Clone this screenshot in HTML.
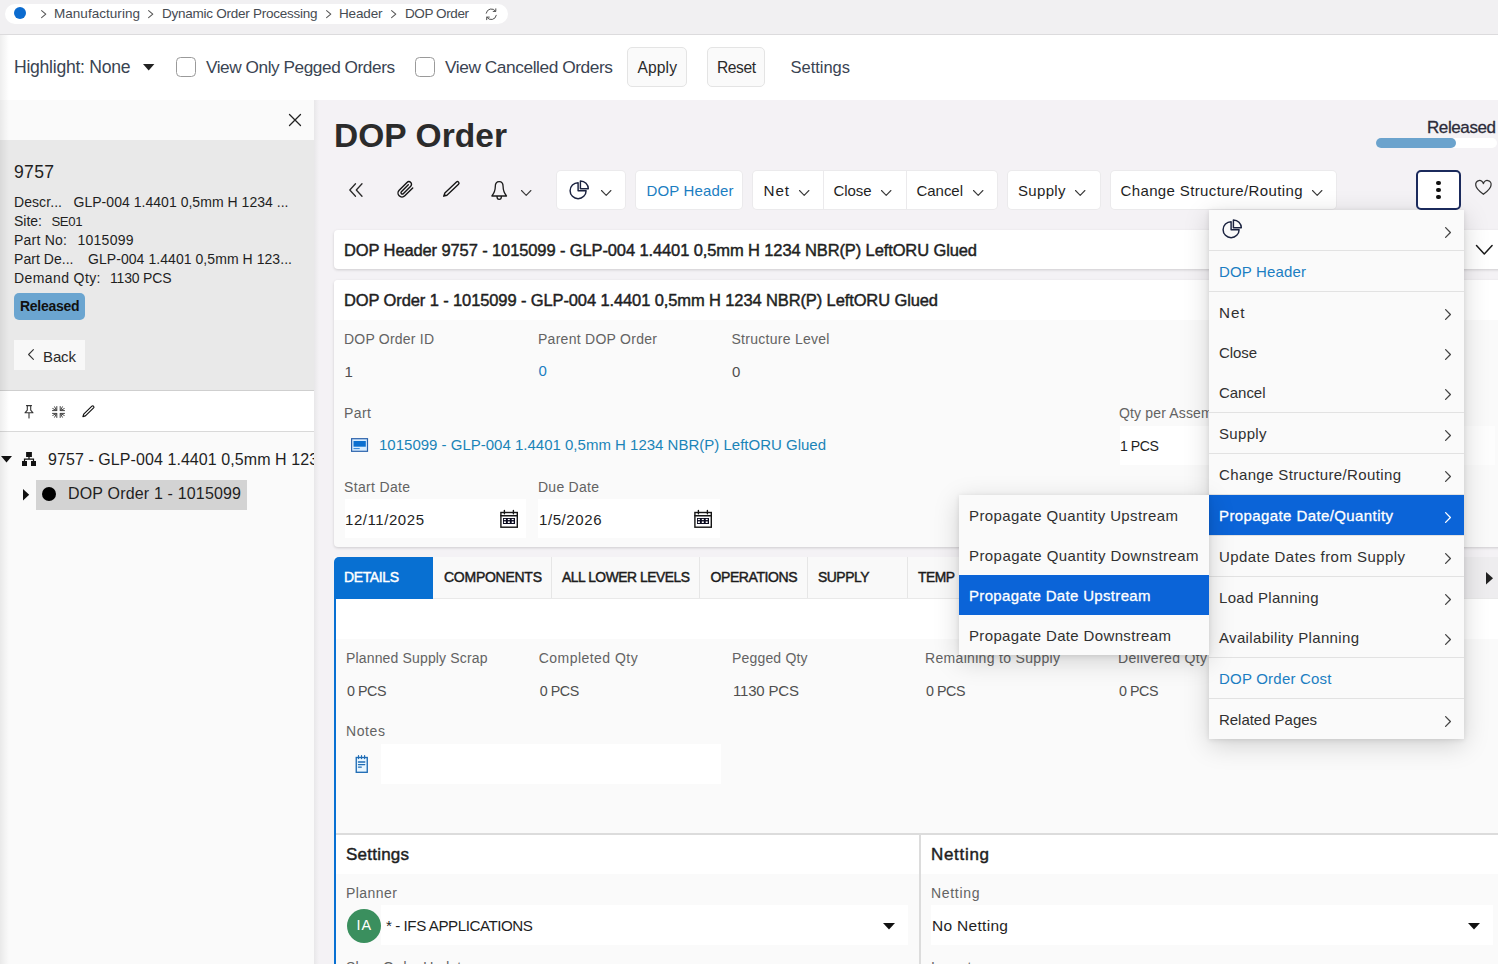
<!DOCTYPE html>
<html lang="en"><head><meta charset="utf-8"><title>DOP Order</title><style>
*{box-sizing:border-box;margin:0;padding:0}
html,body{width:1498px;height:964px;overflow:hidden}
body{background:#f4f2f5;font-family:"Liberation Sans",sans-serif;position:relative}
.t{position:absolute;white-space:nowrap;line-height:20px;display:block}
.a{position:absolute;display:block}
svg{position:absolute;display:block;overflow:visible}
.btn{position:absolute;background:#fff;border-radius:4px;box-shadow:0 0 0 1px #ebeaec}
.inp{position:absolute;background:#fff}
.mi{position:absolute;left:0;width:255px;height:40px}
.sep{position:absolute;left:0;width:255px;height:1px;background:#e3e3e3}
</style></head><body>
<div class="a" style="left:0px;top:0px;width:1498px;height:34px;background:#f1f0f2;"></div>
<div class="a" style="left:0px;top:34px;width:1498px;height:1px;background:#dcdbdd;"></div>
<div class="a" style="left:0px;top:35px;width:1498px;height:65px;background:#ffffff;"></div>
<div class="a" style="left:4.5px;top:4px;width:503.5px;height:20.3px;background:#ffffff;border-radius:10px;"></div>
<div class="a" style="left:14.3px;top:7.4px;width:12px;height:12px;background:#0b6bcf;border-radius:50%;"></div>
<svg style="left:40.5px;top:9.8px;" width="5.4" height="8.2" viewBox="0 0 5.4 8.2"><path d="M0.6 0.6 L4.8 4.1 L0.6 7.6" fill="none" stroke="#555" stroke-width="1.05" stroke-linecap="round" stroke-linejoin="round"/></svg>
<span class="t" style="left:54px;top:6px;line-height:15px;font-size:13.5px;color:#464b52;letter-spacing:0.036px;">Manufacturing</span>
<svg style="left:148px;top:9.8px;" width="5.4" height="8.2" viewBox="0 0 5.4 8.2"><path d="M0.6 0.6 L4.8 4.1 L0.6 7.6" fill="none" stroke="#555" stroke-width="1.05" stroke-linecap="round" stroke-linejoin="round"/></svg>
<span class="t" style="left:162px;top:6px;line-height:15px;font-size:13.5px;color:#464b52;letter-spacing:-0.253px;">Dynamic Order Processing</span>
<svg style="left:326px;top:9.8px;" width="5.4" height="8.2" viewBox="0 0 5.4 8.2"><path d="M0.6 0.6 L4.8 4.1 L0.6 7.6" fill="none" stroke="#555" stroke-width="1.05" stroke-linecap="round" stroke-linejoin="round"/></svg>
<span class="t" style="left:339px;top:6px;line-height:15px;font-size:13.5px;color:#464b52;letter-spacing:-0.156px;">Header</span>
<svg style="left:391px;top:9.8px;" width="5.4" height="8.2" viewBox="0 0 5.4 8.2"><path d="M0.6 0.6 L4.8 4.1 L0.6 7.6" fill="none" stroke="#555" stroke-width="1.05" stroke-linecap="round" stroke-linejoin="round"/></svg>
<span class="t" style="left:405px;top:6px;line-height:15px;font-size:13.5px;color:#464b52;letter-spacing:-0.410px;">DOP Order</span>
<svg style="left:485px;top:7.5px;" width="12.5" height="12.5" viewBox="0 0 12.5 12.5"><g fill="none" stroke="#505050" stroke-width="1" stroke-linecap="round" stroke-linejoin="round"><path d="M1.2 5.2 A5.2 5.2 0 0 1 10.6 3.2 M10.8 0.8 V3.4 H8.2"/><path d="M11.3 7.3 A5.2 5.2 0 0 1 1.9 9.3 M1.7 11.7 V9.1 H4.3"/></g></svg>
<span class="t" style="left:14px;top:57px;line-height:20px;font-size:17.6px;color:#3a4452;letter-spacing:-0.271px;">Highlight: None</span>
<svg style="left:143px;top:63.5px;" width="11.4" height="6.5" viewBox="0 0 11.4 6.5"><path d="M0 0 H11.4 L5.7 6.5 Z" fill="#222"/></svg>
<div class="a" style="left:176px;top:56.5px;width:20px;height:20.5px;background:#fff;border:1px solid #9a9a9a;border-radius:4.5px;"></div>
<span class="t" style="left:206px;top:57px;line-height:20px;font-size:17.24px;color:#3a4452;letter-spacing:-0.450px;">View Only Pegged Orders</span>
<div class="a" style="left:415.3px;top:56.5px;width:20px;height:20.5px;background:#fff;border:1px solid #9a9a9a;border-radius:4.5px;"></div>
<span class="t" style="left:445px;top:57px;line-height:20px;font-size:17.34px;color:#3a4452;letter-spacing:-0.450px;">View Cancelled Orders</span>
<div class="a" style="left:627px;top:47px;width:59.5px;height:39.5px;background:#fafafa;border:1px solid #e4e4e4;border-radius:5px;"></div>
<span class="t" style="left:637.5px;top:59px;line-height:17px;font-size:15.6px;color:#2a2a2a;letter-spacing:0.121px;">Apply</span>
<div class="a" style="left:707px;top:47px;width:57.5px;height:39.5px;background:#fafafa;border:1px solid #e4e4e4;border-radius:5px;"></div>
<span class="t" style="left:717px;top:59px;line-height:17px;font-size:15.6px;color:#2a2a2a;letter-spacing:-0.438px;">Reset</span>
<span class="t" style="left:790.5px;top:58px;line-height:18px;font-size:16.5px;color:#3a4452;letter-spacing:-0.018px;">Settings</span>
<div class="a" style="left:0px;top:100px;width:314px;height:40px;background:#fafafa;"></div>
<div class="a" style="left:0px;top:140px;width:314px;height:250px;background:#e9e9e9;"></div>
<div class="a" style="left:314px;top:100px;width:7px;height:864px;background:transparent;background:linear-gradient(90deg,#e8e7e9 0,#f4f2f5 5px);"></div>
<div class="a" style="left:0px;top:390px;width:314px;height:1px;background:#cfcfcf;"></div>
<div class="a" style="left:0px;top:391px;width:314px;height:40px;background:#ffffff;"></div>
<div class="a" style="left:0px;top:431px;width:314px;height:1px;background:#d9d9d9;"></div>
<div class="a" style="left:0px;top:432px;width:314px;height:532px;background:#fafafa;"></div>
<div class="a" style="left:0px;top:35px;width:9px;height:929px;background:transparent;background:linear-gradient(90deg,rgba(0,0,0,.065) 0,rgba(0,0,0,0) 9px);"></div>
<svg style="left:289px;top:114px;" width="12" height="12" viewBox="0 0 12 12"><path d="M0.5 0.5 L11.5 11.5 M11.5 0.5 L0.5 11.5" stroke="#222" stroke-width="1.3" stroke-linecap="round"/></svg>
<span class="t" style="left:14px;top:162px;line-height:20px;font-size:17.6px;color:#1f1f1f;letter-spacing:0.286px;">9757</span>
<span class="t" style="left:14px;top:194px;line-height:16px;font-size:14px;color:#1f1f1f;letter-spacing:0.076px;">Descr...</span>
<span class="t" style="left:73.5px;top:194px;line-height:16px;font-size:14px;color:#1f1f1f;letter-spacing:0.033px;">GLP-004 1.4401 0,5mm H 1234 ...</span>
<span class="t" style="left:14px;top:213px;line-height:16px;font-size:14px;color:#1f1f1f;letter-spacing:-0.004px;">Site:</span>
<span class="t" style="left:51.5px;top:214px;line-height:15px;font-size:13.22px;color:#1f1f1f;letter-spacing:-0.450px;">SE01</span>
<span class="t" style="left:14px;top:232px;line-height:16px;font-size:14px;color:#1f1f1f;letter-spacing:0.234px;">Part No:</span>
<span class="t" style="left:77.5px;top:232px;line-height:16px;font-size:14px;color:#1f1f1f;letter-spacing:0.247px;">1015099</span>
<span class="t" style="left:14px;top:251px;line-height:16px;font-size:14px;color:#1f1f1f;letter-spacing:0.040px;">Part De...</span>
<span class="t" style="left:88px;top:251px;line-height:16px;font-size:14px;color:#1f1f1f;letter-spacing:0.059px;">GLP-004 1.4401 0,5mm H 123...</span>
<span class="t" style="left:14px;top:270px;line-height:16px;font-size:14px;color:#1f1f1f;letter-spacing:0.402px;">Demand Qty:</span>
<span class="t" style="left:110px;top:270px;line-height:16px;font-size:14px;color:#1f1f1f;letter-spacing:-0.183px;">1130 PCS</span>
<div class="a" style="left:14px;top:293px;width:71px;height:27px;background:#6ba5d0;border-radius:5px;"></div>
<span class="t" style="left:20px;top:298px;line-height:16px;font-size:14px;color:#111;font-weight:700;letter-spacing:-0.283px;">Released</span>
<div class="a" style="left:14px;top:340px;width:71px;height:30px;background:#f8f8f8;"></div>
<svg style="left:28px;top:349px;" width="6" height="11" viewBox="0 0 6 11"><path d="M5.4 0.6 L0.6 5.5 L5.4 10.4" fill="none" stroke="#333" stroke-width="1.1" stroke-linecap="round" stroke-linejoin="round"/></svg>
<span class="t" style="left:43px;top:348px;line-height:17px;font-size:15px;color:#2a2a2a;letter-spacing:-0.120px;">Back</span>
<svg style="left:24px;top:405px;" width="10" height="14" viewBox="0 0 10 14"><g fill="none" stroke="#333" stroke-width="1.1" stroke-linecap="round" stroke-linejoin="round"><path d="M2.5 0.6 H7.5 M3.3 0.6 V5.2 L1 7.8 H9 L6.7 5.2 V0.6 M5 7.8 V13"/></g></svg>
<svg style="left:52px;top:405.5px;" width="13" height="12" viewBox="0 0 13 12"><g fill="none" stroke="#444" stroke-width="1" stroke-linecap="round"><path d="M4.8 0.5 V4.6 H0.5 M2.6 0.8 L4.6 4.4 M0.8 2.6 L4.4 4.4"/><path d="M8.2 0.5 V4.6 H12.5 M10.4 0.8 L8.4 4.4 M12.2 2.6 L8.6 4.4"/><path d="M4.8 11.5 V7.4 H0.5 M2.6 11.2 L4.6 7.6 M0.8 9.4 L4.4 7.6"/><path d="M8.2 11.5 V7.4 H12.5 M10.4 11.2 L8.4 7.6 M12.2 9.4 L8.6 7.6"/></g></svg>
<svg style="left:82px;top:405px;" width="13" height="13" viewBox="0 0 13 13"><path d="M0.9 11.6 L1.7 9.2 L9.9 1.2 A1.15 1.15 0 0 1 11.5 1.2 L11.6 1.3 A1.15 1.15 0 0 1 11.6 2.9 L3.4 10.9 Z" fill="none" stroke="#111" stroke-width="1.15" stroke-linejoin="round"/></svg>
<svg style="left:1px;top:456px;" width="11" height="6.5" viewBox="0 0 11 6.5"><path d="M0 0 H11 L5.5 6.5 Z" fill="#111"/></svg>
<svg style="left:22px;top:452px;" width="14" height="14" viewBox="0 0 14 14"><g fill="#111"><rect x="4.1" y="0" width="5.8" height="5"/><rect x="0" y="9" width="5" height="5"/><rect x="9" y="9" width="5" height="5"/><path d="M6.4 5 h1.2 v1.6 h4.5 v2.4 h-1.2 v-1.2 h-7.8 v1.2 h-1.2 v-2.4 h4.5 z"/></g></svg>
<div class="a" style="left:0;top:440px;width:314px;height:40px;overflow:hidden"><span class="t" style="left:48px;top:11px;line-height:17px;font-size:16px;color:#1f1f1f;letter-spacing:0.074px;">9757 - GLP-004 1.4401 0,5mm H 1234 NBR(P) LeftORU Glued</span></div>
<svg style="left:23px;top:488.5px;" width="6.2" height="11.5" viewBox="0 0 6.2 11.5"><path d="M0 0 V11.5 L6.2 5.75 Z" fill="#111"/></svg>
<div class="a" style="left:36px;top:480px;width:211px;height:29.5px;background:#d3d3d3;"></div>
<div class="a" style="left:42px;top:487px;width:14px;height:14px;background:#000;border-radius:50%;"></div>
<span class="t" style="left:68px;top:485px;line-height:17px;font-size:16px;color:#1f1f1f;letter-spacing:0.171px;">DOP Order 1 - 1015099</span>
<span class="t" style="left:334px;top:117px;line-height:37px;font-size:33.5px;color:#2b2b2b;font-weight:700;letter-spacing:0.059px;">DOP Order</span>
<span class="t" style="left:1427px;top:118px;line-height:19px;font-size:17px;color:#2c2c3a;-webkit-text-stroke:0.3px #2c2c3a;letter-spacing:-0.404px;">Released</span>
<div class="a" style="left:1376px;top:138px;width:120.5px;height:10px;background:#ffffff;border-radius:5px;"></div>
<div class="a" style="left:1376px;top:138px;width:80px;height:10px;background:#6ba3cd;border-radius:5px;"></div>
<svg style="left:349px;top:183px;" width="14" height="14" viewBox="0 0 14 14"><path d="M6.5 0.7 L0.8 7 L6.5 13.3 M13 0.7 L7.3 7 L13 13.3" fill="none" stroke="#2a2a2a" stroke-width="1.3" stroke-linecap="round" stroke-linejoin="round"/></svg>
<svg style="left:395.5px;top:180.2px;" width="18.7" height="18.7" viewBox="0 0 17 17"><path d="M15.2 7.2 L8 14.4 A3.6 3.6 0 0 1 2.9 9.3 L10 2.2 A2.4 2.4 0 0 1 13.4 5.6 L6.6 12.4 A1.2 1.2 0 0 1 4.9 10.7 L11.2 4.4" fill="none" stroke="#151515" stroke-width="1.3" stroke-linecap="round" stroke-linejoin="round"/></svg>
<svg style="left:442.7px;top:181.3px;" width="16.5" height="16" viewBox="0 0 16.5 16"><path d="M0.7 15.2 L1.85 12.05 L13.47 1.04 A1.5 1.5 0 0 1 15.53 3.22 L3.91 14.23 Z" fill="none" stroke="#151515" stroke-width="1.35" stroke-linejoin="round"/><path d="M0.7 15.2 L1.6 12.7 L3.3 14.4 Z" fill="#151515"/></svg>
<svg style="left:490.5px;top:180.8px;" width="16.4" height="19" viewBox="0 0 16.4 19"><path d="M8.2 0.7 C5.2 0.7 4.3 3.2 4.3 5.6 C4.3 9.5 3.2 12.2 0.9 15 H15.5 C13.2 12.2 12.1 9.5 12.1 5.6 C12.1 3.2 11.2 0.7 8.2 0.7 Z M6 15.4 C6 17.4 7 18.3 8.2 18.3 C9.4 18.3 10.4 17.4 10.4 15.4" fill="none" stroke="#1a1a1a" stroke-width="1.3" stroke-linejoin="round"/></svg>
<svg style="left:520.5px;top:189.6px;" width="10.4" height="5.8" viewBox="0 0 10.4 5.8"><path d="M0.5 0.5 L5.2 5.3 L9.9 0.5" fill="none" stroke="#3a3a3a" stroke-width="1.1" stroke-linecap="round" stroke-linejoin="round"/></svg>
<div class="btn" style="left:557px;top:171px;width:68px;height:38px"></div>
<svg style="left:569px;top:179.5px;" width="20" height="20" viewBox="0 0 20 20"><g fill="none" stroke="#1b2340" stroke-width="1.45" stroke-linejoin="round"><path d="M9.1 2.7 A8 8 0 1 0 17.1 10.7 H9.1 Z"/><path d="M11.4 0.9 A7.9 7.9 0 0 1 19.3 8.8 H11.4 Z"/></g></svg>
<svg style="left:600.5px;top:189.6px;" width="10.4" height="5.8" viewBox="0 0 10.4 5.8"><path d="M0.5 0.5 L5.2 5.3 L9.9 0.5" fill="none" stroke="#3a3a3a" stroke-width="1.1" stroke-linecap="round" stroke-linejoin="round"/></svg>
<div class="btn" style="left:636px;top:171px;width:106px;height:38px"></div>
<span class="t" style="left:646.5px;top:182px;line-height:17px;font-size:15px;color:#1b7ec2;letter-spacing:0.155px;">DOP Header</span>
<div class="btn" style="left:753px;top:171px;width:243.5px;height:38px"></div>
<div class="a" style="left:822.5px;top:171px;width:1px;height:38px;background:#ebeaec;"></div>
<div class="a" style="left:905.5px;top:171px;width:1px;height:38px;background:#ebeaec;"></div>
<span class="t" style="left:763.5px;top:182px;line-height:17px;font-size:15.23px;color:#1f1f1f;letter-spacing:0.900px;">Net</span>
<svg style="left:798.5px;top:189.6px;" width="10.4" height="5.8" viewBox="0 0 10.4 5.8"><path d="M0.5 0.5 L5.2 5.3 L9.9 0.5" fill="none" stroke="#3a3a3a" stroke-width="1.1" stroke-linecap="round" stroke-linejoin="round"/></svg>
<span class="t" style="left:833.5px;top:182px;line-height:17px;font-size:15px;color:#1f1f1f;letter-spacing:-0.090px;">Close</span>
<svg style="left:881px;top:189.6px;" width="10.4" height="5.8" viewBox="0 0 10.4 5.8"><path d="M0.5 0.5 L5.2 5.3 L9.9 0.5" fill="none" stroke="#3a3a3a" stroke-width="1.1" stroke-linecap="round" stroke-linejoin="round"/></svg>
<span class="t" style="left:916.5px;top:182px;line-height:17px;font-size:15px;color:#1f1f1f;letter-spacing:-0.041px;">Cancel</span>
<svg style="left:972.5px;top:189.6px;" width="10.4" height="5.8" viewBox="0 0 10.4 5.8"><path d="M0.5 0.5 L5.2 5.3 L9.9 0.5" fill="none" stroke="#3a3a3a" stroke-width="1.1" stroke-linecap="round" stroke-linejoin="round"/></svg>
<div class="btn" style="left:1008px;top:171px;width:91.5px;height:38px"></div>
<span class="t" style="left:1018px;top:182px;line-height:17px;font-size:15px;color:#1f1f1f;letter-spacing:0.325px;">Supply</span>
<svg style="left:1075px;top:189.6px;" width="10.4" height="5.8" viewBox="0 0 10.4 5.8"><path d="M0.5 0.5 L5.2 5.3 L9.9 0.5" fill="none" stroke="#3a3a3a" stroke-width="1.1" stroke-linecap="round" stroke-linejoin="round"/></svg>
<div class="btn" style="left:1111px;top:171px;width:224.5px;height:38px"></div>
<span class="t" style="left:1120.5px;top:182px;line-height:17px;font-size:15px;color:#1f1f1f;letter-spacing:0.372px;">Change Structure/Routing</span>
<svg style="left:1311.5px;top:189.6px;" width="10.4" height="5.8" viewBox="0 0 10.4 5.8"><path d="M0.5 0.5 L5.2 5.3 L9.9 0.5" fill="none" stroke="#3a3a3a" stroke-width="1.1" stroke-linecap="round" stroke-linejoin="round"/></svg>
<svg style="left:1475.2px;top:180.3px;" width="16.8" height="15.6" viewBox="0 0 18 16"><path d="M9 15 C3 10.5 0.8 7.8 0.8 5 A4.1 4.1 0 0 1 9 3.6 A4.1 4.1 0 0 1 17.2 5 C17.2 7.8 15 10.5 9 15 Z" fill="none" stroke="#333" stroke-width="1.35" stroke-linejoin="round"/></svg>
<div class="a" style="left:334px;top:230px;width:1180px;height:39px;background:#ffffff;border-radius:4px;box-shadow:0 1px 3px rgba(0,0,0,.16);"></div>
<span class="t" style="left:344px;top:241px;line-height:18px;font-size:16.5px;color:#1f1f1f;-webkit-text-stroke:0.45px #1f1f1f;letter-spacing:-0.116px;">DOP Header 9757 - 1015099 - GLP-004 1.4401 0,5mm H 1234 NBR(P) LeftORU Glued</span>
<svg style="left:1475.7px;top:245.2px;" width="16.6" height="9.4" viewBox="0 0 16.6 9.4"><path d="M0.5 0.5 L8.3 8.9 L16.1 0.5" fill="none" stroke="#1a1a1a" stroke-width="1.5" stroke-linecap="round" stroke-linejoin="round"/></svg>
<div class="a" style="left:334px;top:280px;width:1180px;height:267px;background:#fafafa;border-radius:4px;box-shadow:0 1px 3px rgba(0,0,0,.16);"></div>
<div class="a" style="left:334px;top:280px;width:1180px;height:40px;background:#ffffff;border-radius:4px 4px 0 0;"></div>
<span class="t" style="left:344px;top:291px;line-height:18px;font-size:16.5px;color:#1f1f1f;-webkit-text-stroke:0.45px #1f1f1f;letter-spacing:-0.116px;">DOP Order 1 - 1015099 - GLP-004 1.4401 0,5mm H 1234 NBR(P) LeftORU Glued</span>
<span class="t" style="left:344px;top:331px;line-height:16px;font-size:14px;color:#636363;letter-spacing:0.213px;">DOP Order ID</span>
<span class="t" style="left:538px;top:331px;line-height:16px;font-size:14px;color:#636363;letter-spacing:0.273px;">Parent DOP Order</span>
<span class="t" style="left:731.5px;top:331px;line-height:16px;font-size:14px;color:#636363;letter-spacing:0.273px;">Structure Level</span>
<span class="t" style="left:344.5px;top:363px;line-height:17px;font-size:15px;color:#4f4f4f;">1</span>
<span class="t" style="left:538.5px;top:362px;line-height:17px;font-size:15px;color:#1b7ec2;">0</span>
<span class="t" style="left:732px;top:363px;line-height:17px;font-size:15px;color:#4f4f4f;">0</span>
<span class="t" style="left:344px;top:405px;line-height:16px;font-size:14px;color:#636363;letter-spacing:0.438px;">Part</span>
<span class="t" style="left:1119px;top:405px;line-height:16px;font-size:14px;color:#636363;letter-spacing:0.153px;">Qty per Assembly</span>
<div class="a" style="left:1119.5px;top:426px;width:192px;height:38.5px;background:#ffffff;"></div>
<div class="a" style="left:1320px;top:426px;width:175px;height:38.5px;background:#fdfdfd;"></div>
<span class="t" style="left:1120px;top:438px;line-height:16px;font-size:14.11px;color:#1f1f1f;letter-spacing:-0.450px;">1 PCS</span>
<svg style="left:351px;top:438px;" width="17" height="14" viewBox="0 0 17 14"><rect x="0.6" y="0.7" width="15.9" height="12.6" fill="#d6ecff" stroke="#2a62ab" stroke-width="1.2"/><rect x="2.5" y="3" width="12.3" height="5.7" fill="#0b6fd0"/><rect x="2.5" y="10.1" width="6.2" height="1" fill="#2a80d8"/></svg>
<span class="t" style="left:379px;top:436px;line-height:17px;font-size:15px;color:#1b84b8;letter-spacing:0.002px;">1015099 - GLP-004 1.4401 0,5mm H 1234 NBR(P) LeftORU Glued</span>
<span class="t" style="left:344px;top:479px;line-height:16px;font-size:14px;color:#636363;letter-spacing:0.330px;">Start Date</span>
<span class="t" style="left:538px;top:479px;line-height:16px;font-size:14px;color:#636363;letter-spacing:0.263px;">Due Date</span>
<div class="a" style="left:344.5px;top:499px;width:181.5px;height:39px;background:#ffffff;"></div>
<div class="a" style="left:538px;top:499px;width:182px;height:39px;background:#ffffff;"></div>
<span class="t" style="left:345px;top:511px;line-height:17px;font-size:15px;color:#1f1f1f;letter-spacing:0.559px;">12/11/2025</span>
<span class="t" style="left:539px;top:511px;line-height:17px;font-size:15px;color:#1f1f1f;letter-spacing:0.587px;">1/5/2026</span>
<svg style="left:500px;top:510px;" width="18" height="18" viewBox="0 0 18 18"><g fill="none" stroke="#161616" stroke-width="1.4"><rect x="0.9" y="2.5" width="16.4" height="14.7"/><path d="M0.9 5.7 H17.3 M4.4 0.4 V3.7 M13.4 0.4 V3.7" stroke-linecap="round"/></g><rect x="3" y="8" width="12" height="6" fill="#0a0a1e"/><rect x="3.9" y="8.9" width="2" height="1.2" fill="#fff"/><rect x="3.9" y="11.4" width="2" height="1.6" fill="#fff"/><rect x="7.8" y="8.9" width="2" height="1.2" fill="#fff"/><rect x="7.8" y="11.4" width="2" height="1.6" fill="#fff"/><rect x="11.7" y="8.9" width="2" height="1.2" fill="#fff"/><rect x="11.7" y="11.4" width="2" height="1.6" fill="#fff"/></svg>
<svg style="left:693.5px;top:510px;" width="18" height="18" viewBox="0 0 18 18"><g fill="none" stroke="#161616" stroke-width="1.4"><rect x="0.9" y="2.5" width="16.4" height="14.7"/><path d="M0.9 5.7 H17.3 M4.4 0.4 V3.7 M13.4 0.4 V3.7" stroke-linecap="round"/></g><rect x="3" y="8" width="12" height="6" fill="#0a0a1e"/><rect x="3.9" y="8.9" width="2" height="1.2" fill="#fff"/><rect x="3.9" y="11.4" width="2" height="1.6" fill="#fff"/><rect x="7.8" y="8.9" width="2" height="1.2" fill="#fff"/><rect x="7.8" y="11.4" width="2" height="1.6" fill="#fff"/><rect x="11.7" y="8.9" width="2" height="1.2" fill="#fff"/><rect x="11.7" y="11.4" width="2" height="1.6" fill="#fff"/></svg>
<div class="a" style="left:334px;top:557px;width:1144px;height:42px;background:#f9f9f9;"></div>
<div class="a" style="left:1452px;top:557px;width:46px;height:42px;background:#eeedef;"></div>
<div class="a" style="left:334px;top:557px;width:99px;height:42px;background:#0870d2;border-radius:5px 0 0 0;"></div>
<div class="a" style="left:551px;top:557px;width:1px;height:42px;background:#e6e6e6;"></div>
<div class="a" style="left:699px;top:557px;width:1px;height:42px;background:#e6e6e6;"></div>
<div class="a" style="left:807px;top:557px;width:1px;height:42px;background:#e6e6e6;"></div>
<div class="a" style="left:907px;top:557px;width:1px;height:42px;background:#e6e6e6;"></div>
<div class="a" style="left:433px;top:598px;width:1065px;height:1px;background:#e9e9e9;"></div>
<span class="t" style="left:344px;top:569px;line-height:16px;font-size:14px;color:#ffffff;-webkit-text-stroke:0.45px #ffffff;letter-spacing:-0.385px;">DETAILS</span>
<span class="t" style="left:444px;top:569px;line-height:16px;font-size:14px;color:#1c1c1c;-webkit-text-stroke:0.45px #1c1c1c;letter-spacing:-0.260px;">COMPONENTS</span>
<span class="t" style="left:562px;top:569px;line-height:16px;font-size:13.83px;color:#1c1c1c;-webkit-text-stroke:0.45px #1c1c1c;letter-spacing:-0.450px;">ALL LOWER LEVELS</span>
<span class="t" style="left:710.5px;top:569px;line-height:16px;font-size:14px;color:#1c1c1c;-webkit-text-stroke:0.45px #1c1c1c;letter-spacing:-0.418px;">OPERATIONS</span>
<span class="t" style="left:818px;top:569px;line-height:16px;font-size:13.88px;color:#1c1c1c;-webkit-text-stroke:0.45px #1c1c1c;letter-spacing:-0.450px;">SUPPLY</span>
<span class="t" style="left:918px;top:569px;line-height:16px;font-size:13.81px;color:#1c1c1c;-webkit-text-stroke:0.45px #1c1c1c;letter-spacing:-0.450px;">TEMP</span>
<svg style="left:1486px;top:571.5px;" width="7" height="12.5" viewBox="0 0 7 12.5"><path d="M0 0 V12.5 L7 6.25 Z" fill="#222"/></svg>
<div class="a" style="left:334px;top:599px;width:1164px;height:40px;background:#ffffff;"></div>
<div class="a" style="left:334px;top:639px;width:1164px;height:194px;background:#fafafa;"></div>
<div class="a" style="left:334px;top:599px;width:2px;height:365px;background:#0870d2;"></div>
<span class="t" style="left:346px;top:650px;line-height:16px;font-size:14px;color:#636363;letter-spacing:0.155px;">Planned Supply Scrap</span>
<span class="t" style="left:347px;top:683px;line-height:16px;font-size:14.29px;color:#4f4f4f;letter-spacing:-0.450px;">0 PCS</span>
<span class="t" style="left:538.7px;top:650px;line-height:16px;font-size:14px;color:#636363;letter-spacing:0.469px;">Completed Qty</span>
<span class="t" style="left:539.7px;top:683px;line-height:16px;font-size:14.29px;color:#4f4f4f;letter-spacing:-0.450px;">0 PCS</span>
<span class="t" style="left:732px;top:650px;line-height:16px;font-size:14px;color:#636363;letter-spacing:0.174px;">Pegged Qty</span>
<span class="t" style="left:733px;top:682px;line-height:17px;font-size:15px;color:#4f4f4f;letter-spacing:-0.181px;">1130 PCS</span>
<span class="t" style="left:925px;top:650px;line-height:16px;font-size:14px;color:#636363;letter-spacing:0.323px;">Remaining to Supply</span>
<span class="t" style="left:926px;top:683px;line-height:16px;font-size:14.29px;color:#4f4f4f;letter-spacing:-0.450px;">0 PCS</span>
<span class="t" style="left:1118px;top:650px;line-height:16px;font-size:14px;color:#636363;letter-spacing:0.349px;">Delivered Qty</span>
<span class="t" style="left:1119px;top:683px;line-height:16px;font-size:14.29px;color:#4f4f4f;letter-spacing:-0.450px;">0 PCS</span>
<span class="t" style="left:346px;top:723px;line-height:16px;font-size:14px;color:#636363;letter-spacing:0.605px;">Notes</span>
<div class="a" style="left:381px;top:744px;width:340px;height:39.5px;background:#ffffff;"></div>
<svg style="left:355px;top:755px;" width="13" height="18" viewBox="0 0 13 18"><g fill="none" stroke="#1f6cb5" stroke-linecap="round"><rect x="1.25" y="2.5" width="11" height="14.8" fill="#e8f6ff" stroke-width="1.35" stroke-linecap="butt"/><path d="M3.5 0.5 V3.6 M6.5 0.5 V3.6 M9.6 0.5 V3.6" stroke-width="1.2"/><path d="M3.4 7 H9.8" stroke-width="1.3"/><path d="M3.4 9.6 H9.8 M3.4 12.1 H6.4" stroke-width="1.1"/></g></svg>
<div class="a" style="left:336px;top:833px;width:1162px;height:1.5px;background:#dcdcdc;"></div>
<div class="a" style="left:336px;top:834.5px;width:1162px;height:39.5px;background:#ffffff;"></div>
<div class="a" style="left:336px;top:874px;width:1162px;height:90px;background:#fafafa;"></div>
<div class="a" style="left:918.5px;top:834px;width:2px;height:130px;background:#dcdcdc;"></div>
<span class="t" style="left:346px;top:845px;line-height:19px;font-size:17px;color:#1f1f1f;-webkit-text-stroke:0.45px #1f1f1f;letter-spacing:0.223px;">Settings</span>
<span class="t" style="left:931px;top:845px;line-height:19px;font-size:17px;color:#1f1f1f;-webkit-text-stroke:0.45px #1f1f1f;letter-spacing:0.688px;">Netting</span>
<span class="t" style="left:346px;top:885px;line-height:16px;font-size:14px;color:#636363;letter-spacing:0.456px;">Planner</span>
<span class="t" style="left:931px;top:885px;line-height:16px;font-size:14px;color:#636363;letter-spacing:0.690px;">Netting</span>
<div class="a" style="left:381px;top:905px;width:527px;height:39.5px;background:#ffffff;"></div>
<div class="a" style="left:346.5px;top:909px;width:34px;height:34px;background:#3a8f5e;border-radius:50%;"></div>
<span class="t" style="left:356.5px;top:917px;line-height:16px;font-size:14.39px;color:#ffffff;letter-spacing:0.900px;">IA</span>
<span class="t" style="left:386px;top:917px;line-height:17px;font-size:15.16px;color:#1f1f1f;letter-spacing:-0.450px;">* - IFS APPLICATIONS</span>
<svg style="left:883px;top:922.5px;" width="12" height="6.5" viewBox="0 0 12 6.5"><path d="M0 0 H12 L6 6.5 Z" fill="#111"/></svg>
<div class="a" style="left:931px;top:905px;width:562px;height:39.5px;background:#ffffff;"></div>
<span class="t" style="left:932px;top:917px;line-height:17px;font-size:15.5px;color:#1f1f1f;letter-spacing:0.307px;">No Netting</span>
<svg style="left:1467.5px;top:922.5px;" width="12" height="6.5" viewBox="0 0 12 6.5"><path d="M0 0 H12 L6 6.5 Z" fill="#111"/></svg>
<span class="t" style="left:346px;top:959px;line-height:16px;font-size:14px;color:#636363;letter-spacing:0.100px;">Shop Order Update</span>
<span class="t" style="left:931px;top:959px;line-height:16px;font-size:14px;color:#636363;letter-spacing:0.426px;">Inventory</span>
<div class="a" style="left:1209px;top:210px;width:255px;height:529px;background:#fafafa;box-shadow:0 6px 24px rgba(0,0,0,.17),0 1px 5px rgba(0,0,0,.10);"></div>
<div class="a" style="left:1209px;top:495px;width:255px;height:40px;background:#0b64d8;"></div>
<div class="a" style="left:1209px;top:250px;width:255px;height:1px;background:#e2e2e2;"></div>
<div class="a" style="left:1209px;top:291px;width:255px;height:1px;background:#e2e2e2;"></div>
<div class="a" style="left:1209px;top:412px;width:255px;height:1px;background:#e2e2e2;"></div>
<div class="a" style="left:1209px;top:453px;width:255px;height:1px;background:#e2e2e2;"></div>
<div class="a" style="left:1209px;top:494px;width:255px;height:1px;background:#e2e2e2;"></div>
<div class="a" style="left:1209px;top:535px;width:255px;height:1px;background:#e2e2e2;"></div>
<div class="a" style="left:1209px;top:576px;width:255px;height:1px;background:#e2e2e2;"></div>
<div class="a" style="left:1209px;top:657px;width:255px;height:1px;background:#e2e2e2;"></div>
<div class="a" style="left:1209px;top:698px;width:255px;height:1px;background:#e2e2e2;"></div>
<div class="a" style="left:959px;top:495px;width:250px;height:160px;background:#fafafa;box-shadow:0 6px 24px rgba(0,0,0,.17),0 1px 5px rgba(0,0,0,.10);"></div>
<div class="a" style="left:959px;top:575px;width:250px;height:40px;background:#0b64d8;"></div>
<svg style="left:1222px;top:219.3px;" width="20" height="20" viewBox="0 0 20 20"><g fill="none" stroke="#1b2340" stroke-width="1.45" stroke-linejoin="round"><path d="M9.1 2.7 A8 8 0 1 0 17.1 10.7 H9.1 Z"/><path d="M11.4 0.9 A7.9 7.9 0 0 1 19.3 8.8 H11.4 Z"/></g></svg>
<span class="t" style="left:1219px;top:263px;line-height:17px;font-size:15px;color:#1b7ec2;letter-spacing:0.155px;">DOP Header</span>
<span class="t" style="left:1219px;top:304px;line-height:17px;font-size:15.23px;color:#303030;letter-spacing:0.900px;">Net</span>
<span class="t" style="left:1219px;top:344px;line-height:17px;font-size:15px;color:#303030;letter-spacing:-0.090px;">Close</span>
<span class="t" style="left:1219px;top:384px;line-height:17px;font-size:15px;color:#303030;letter-spacing:-0.041px;">Cancel</span>
<span class="t" style="left:1219px;top:425px;line-height:17px;font-size:15px;color:#303030;letter-spacing:0.325px;">Supply</span>
<span class="t" style="left:1219px;top:466px;line-height:17px;font-size:15px;color:#303030;letter-spacing:0.372px;">Change Structure/Routing</span>
<span class="t" style="left:1219px;top:507px;line-height:17px;font-size:15px;color:#fff;-webkit-text-stroke:0.3px #fff;letter-spacing:0.404px;">Propagate Date/Quantity</span>
<span class="t" style="left:1219px;top:548px;line-height:17px;font-size:15px;color:#303030;letter-spacing:0.438px;">Update Dates from Supply</span>
<span class="t" style="left:1219px;top:589px;line-height:17px;font-size:15px;color:#303030;letter-spacing:0.298px;">Load Planning</span>
<span class="t" style="left:1219px;top:629px;line-height:17px;font-size:15px;color:#303030;letter-spacing:0.343px;">Availability Planning</span>
<span class="t" style="left:1219px;top:670px;line-height:17px;font-size:15px;color:#1b7ec2;letter-spacing:0.210px;">DOP Order Cost</span>
<span class="t" style="left:1219px;top:711px;line-height:17px;font-size:15px;color:#303030;letter-spacing:-0.034px;">Related Pages</span>
<svg style="left:1445px;top:226.5px;" width="6" height="11" viewBox="0 0 6 11"><path d="M0.6 0.6 L5.4 5.5 L0.6 10.4" fill="none" stroke="#444" stroke-width="1.3" stroke-linecap="round" stroke-linejoin="round"/></svg>
<svg style="left:1445px;top:309px;" width="6" height="11" viewBox="0 0 6 11"><path d="M0.6 0.6 L5.4 5.5 L0.6 10.4" fill="none" stroke="#444" stroke-width="1.3" stroke-linecap="round" stroke-linejoin="round"/></svg>
<svg style="left:1445px;top:349px;" width="6" height="11" viewBox="0 0 6 11"><path d="M0.6 0.6 L5.4 5.5 L0.6 10.4" fill="none" stroke="#444" stroke-width="1.3" stroke-linecap="round" stroke-linejoin="round"/></svg>
<svg style="left:1445px;top:389px;" width="6" height="11" viewBox="0 0 6 11"><path d="M0.6 0.6 L5.4 5.5 L0.6 10.4" fill="none" stroke="#444" stroke-width="1.3" stroke-linecap="round" stroke-linejoin="round"/></svg>
<svg style="left:1445px;top:430px;" width="6" height="11" viewBox="0 0 6 11"><path d="M0.6 0.6 L5.4 5.5 L0.6 10.4" fill="none" stroke="#444" stroke-width="1.3" stroke-linecap="round" stroke-linejoin="round"/></svg>
<svg style="left:1445px;top:471px;" width="6" height="11" viewBox="0 0 6 11"><path d="M0.6 0.6 L5.4 5.5 L0.6 10.4" fill="none" stroke="#444" stroke-width="1.3" stroke-linecap="round" stroke-linejoin="round"/></svg>
<svg style="left:1445px;top:512px;" width="6" height="11" viewBox="0 0 6 11"><path d="M0.6 0.6 L5.4 5.5 L0.6 10.4" fill="none" stroke="#fff" stroke-width="1.3" stroke-linecap="round" stroke-linejoin="round"/></svg>
<svg style="left:1445px;top:553px;" width="6" height="11" viewBox="0 0 6 11"><path d="M0.6 0.6 L5.4 5.5 L0.6 10.4" fill="none" stroke="#444" stroke-width="1.3" stroke-linecap="round" stroke-linejoin="round"/></svg>
<svg style="left:1445px;top:594px;" width="6" height="11" viewBox="0 0 6 11"><path d="M0.6 0.6 L5.4 5.5 L0.6 10.4" fill="none" stroke="#444" stroke-width="1.3" stroke-linecap="round" stroke-linejoin="round"/></svg>
<svg style="left:1445px;top:634px;" width="6" height="11" viewBox="0 0 6 11"><path d="M0.6 0.6 L5.4 5.5 L0.6 10.4" fill="none" stroke="#444" stroke-width="1.3" stroke-linecap="round" stroke-linejoin="round"/></svg>
<svg style="left:1445px;top:716px;" width="6" height="11" viewBox="0 0 6 11"><path d="M0.6 0.6 L5.4 5.5 L0.6 10.4" fill="none" stroke="#444" stroke-width="1.3" stroke-linecap="round" stroke-linejoin="round"/></svg>
<span class="t" style="left:969px;top:507px;line-height:17px;font-size:15px;color:#303030;letter-spacing:0.406px;">Propagate Quantity Upstream</span>
<span class="t" style="left:969px;top:547px;line-height:17px;font-size:15px;color:#303030;letter-spacing:0.424px;">Propagate Quantity Downstream</span>
<span class="t" style="left:969px;top:587px;line-height:17px;font-size:15px;color:#fff;-webkit-text-stroke:0.3px #fff;letter-spacing:0.329px;">Propagate Date Upstream</span>
<span class="t" style="left:969px;top:627px;line-height:17px;font-size:15px;color:#303030;letter-spacing:0.357px;">Propagate Date Downstream</span>
<div class="a" style="left:1416px;top:170px;width:45px;height:40px;background:#fff;border:2px solid #1b2a5c;border-radius:5px;"></div>
<div class="a" style="left:1436.4px;top:181.2px;width:4.2px;height:4.2px;background:#111;border-radius:50%;"></div>
<div class="a" style="left:1436.4px;top:187.9px;width:4.2px;height:4.2px;background:#111;border-radius:50%;"></div>
<div class="a" style="left:1436.4px;top:194.7px;width:4.2px;height:4.2px;background:#111;border-radius:50%;"></div>
</body></html>
